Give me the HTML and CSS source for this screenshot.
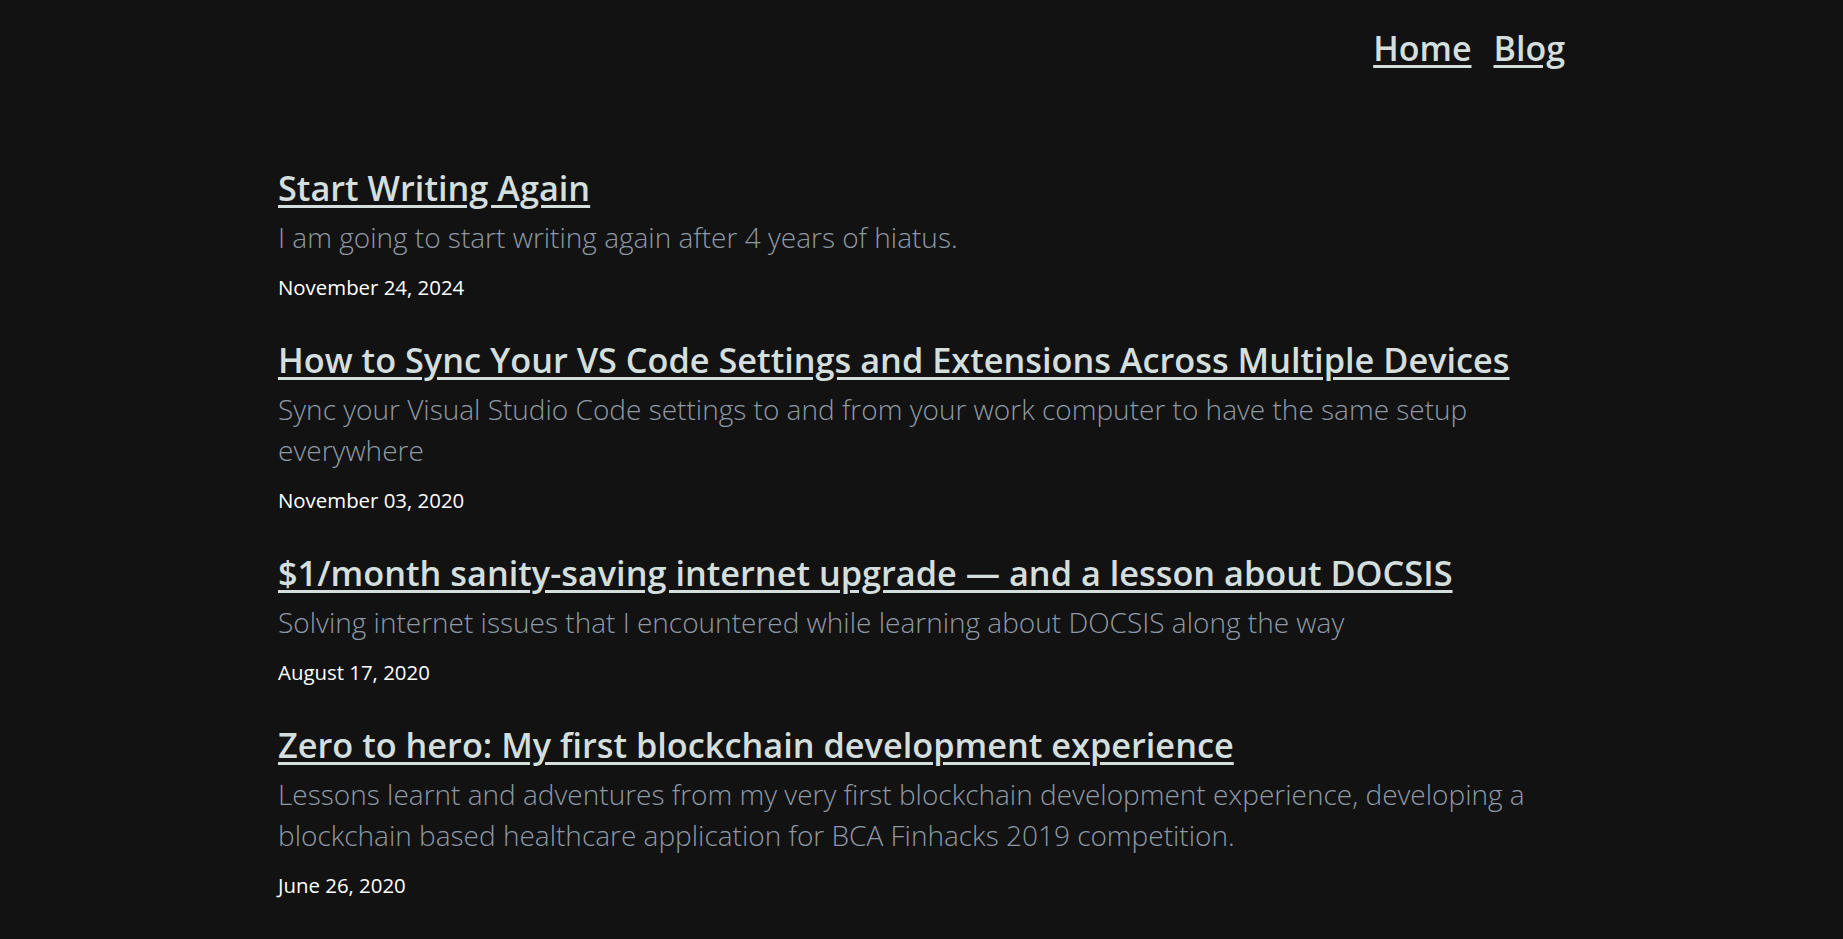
FILE: index.html
```html
<!DOCTYPE html>
<html lang="en">
<head>
<meta charset="utf-8">
<title>Blog</title>
<link rel="stylesheet" href="styles.css">
</head>
<body>
<div class="page">
  <header class="top">
    <nav class="nav">
      <a href="#" class="nav-link">Home</a>
      <a href="#" class="nav-link">Blog</a>
    </nav>
  </header>
  <main class="posts">
    <article class="post">
      <h2 class="post-title"><a href="#">Start Writing Again</a></h2>
      <p class="post-desc">I am going to start writing again after 4 years of hiatus.</p>
      <p class="post-date">November 24, 2024</p>
    </article>
    <article class="post">
      <h2 class="post-title"><a href="#">How to Sync Your VS Code Settings and Extensions Across Multiple Devices</a></h2>
      <p class="post-desc">Sync your Visual Studio Code settings to and from your work computer to have the same setup everywhere</p>
      <p class="post-date">November 03, 2020</p>
    </article>
    <article class="post">
      <h2 class="post-title"><a href="#">$1/month sanity-saving internet upgrade — and a lesson about DOCSIS</a></h2>
      <p class="post-desc">Solving internet issues that I encountered while learning about DOCSIS along the way</p>
      <p class="post-date">August 17, 2020</p>
    </article>
    <article class="post">
      <h2 class="post-title"><a href="#">Zero to hero: My first blockchain development experience</a></h2>
      <p class="post-desc">Lessons learnt and adventures from my very first blockchain development experience, developing a blockchain based healthcare application for BCA Finhacks 2019 competition.</p>
      <p class="post-date">June 26, 2020</p>
    </article>
  </main>
</div>
</body>
</html>
```

FILE: styles.css
```css
html, body {
  margin: 0;
  padding: 0;
  background: #121212;
}

body {
  font-family: "Open Sans", "Noto Sans", sans-serif;
  color: #ffffff;
}

.page {
  width: 1287px;
  margin: 0 auto;
}

.top {
  padding-top: 28px;
}

.nav {
  display: flex;
  justify-content: flex-end;
  gap: 22px;
}

.nav-link {
  font-size: 34px;
  line-height: 41.6px;
  font-weight: 600;
  color: #d3dedd;
  text-decoration: underline;
  text-decoration-thickness: 3px;
  text-underline-offset: 4px;
}

.posts {
  padding-top: 97px;
}

.post {
  margin-bottom: 37.5px;
}

.post-title {
  margin: 0;
  font-size: 34.3px;
  line-height: 41.6px;
  font-weight: 600;
}

.post-title a {
  color: #d3dedd;
  text-decoration: underline;
  text-decoration-thickness: 3px;
  text-underline-offset: 4px;
}

.post-desc {
  margin: 8.5px 0 0;
  font-size: 28px;
  line-height: 41px;
  font-weight: 300;
  color: #8f99a5;
}

.post-date {
  margin: 16.5px 0 0;
  font-size: 20.4px;
  line-height: 27px;
  font-weight: 400;
  color: #ffffff;
}
```
